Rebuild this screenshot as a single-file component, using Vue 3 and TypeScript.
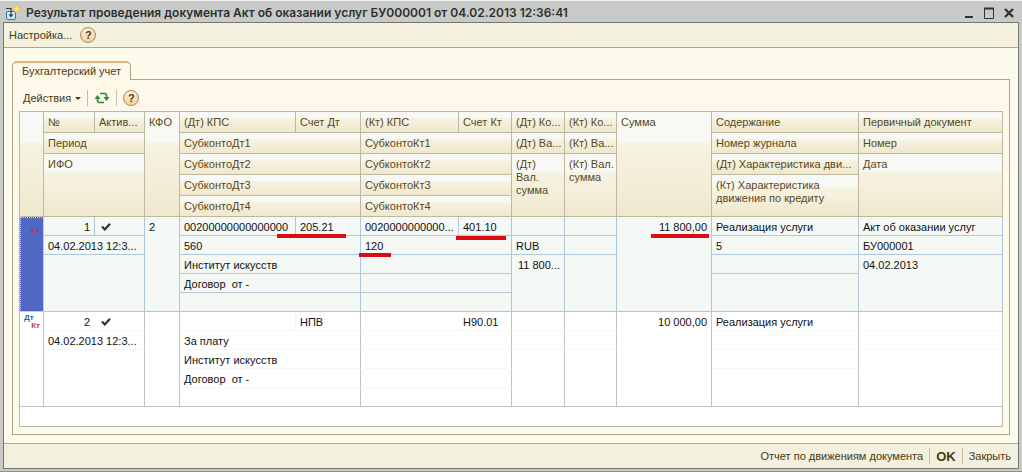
<script setup lang="ts">
interface Cell {
  text?: string
  cs?: number
  rs?: number
  cls?: string
  kind?: 'check' | 'flag'
}

const columns: string[] = ['c24', 'c51', 'c50', 'c35', 'c116', 'c65', 'c98', 'c53', 'c53', 'c52', 'c95', 'c147', 'rest']

const header: Cell[][] = [
  [
    { rs: 5 }, { text: '№' }, { text: 'Актив...' }, { text: 'КФО', rs: 5, cls: 'tight' },
    { text: '(Дт) КПС' }, { text: 'Счет Дт' }, { text: '(Кт) КПС' }, { text: 'Счет Кт' },
    { text: '(Дт) Ко...' }, { text: '(Кт) Ко...' }, { text: 'Сумма', rs: 5 },
    { text: 'Содержание' }, { text: 'Первичный документ' },
  ],
  [
    { text: 'Период', cs: 2 }, { text: 'СубконтоДт1', cs: 2 }, { text: 'СубконтоКт1', cs: 2 },
    { text: '(Дт) Ва...' }, { text: '(Кт) Ва...' }, { text: 'Номер журнала' }, { text: 'Номер' },
  ],
  [
    { text: 'ИФО', cs: 2, rs: 3 }, { text: 'СубконтоДт2', cs: 2 }, { text: 'СубконтоКт2', cs: 2 },
    { text: '(Дт)\nВал.\nсумма', rs: 3 }, { text: '(Кт) Вал.\nсумма', rs: 3 },
    { text: '(Дт) Характеристика дви...' }, { text: 'Дата', rs: 3 },
  ],
  [
    { text: 'СубконтоДт3', cs: 2 }, { text: 'СубконтоКт3', cs: 2 },
    { text: '(Кт) Характеристика\nдвижения по кредиту', rs: 2 },
  ],
  [{ text: 'СубконтоДт4', cs: 2 }, { text: 'СубконтоКт4', cs: 2 }],
]

const records: { id: number; selected: boolean; rows: Cell[][] }[] = [
  {
    id: 1,
    selected: true,
    rows: [
      [
        { rs: 5, kind: 'flag', cls: 'flag' }, { text: '1', cls: 'num' }, { kind: 'check' }, { text: '2', rs: 5, cls: 'tight' },
        { text: '00200000000000000' }, { text: '205.21', cls: 'mark mark-account' },
        { text: '0020000000000...' }, { text: '401.10', cls: 'mark mark-credit' },
        {}, {}, { text: '11 800,00', rs: 5, cls: 'num mark mark-sum' },
        { text: 'Реализация услуги' }, { text: 'Акт об оказании услуг' },
      ],
      [
        { text: '04.02.2013 12:3...', cs: 2 }, { text: '560', cs: 2 }, { text: '120', cs: 2, cls: 'mark mark-code' },
        { text: 'RUB' }, {}, { text: '5' }, { text: 'БУ000001' },
      ],
      [
        { cs: 2, rs: 3 }, { text: 'Институт искусств', cs: 2 }, { cs: 2 },
        { text: '11 800...', rs: 3, cls: 'num' }, { rs: 3 }, {}, { text: '04.02.2013', rs: 3 },
      ],
      [{ text: 'Договор  от -', cs: 2 }, { cs: 2 }, { rs: 2 }],
      [{ cs: 2 }, { cs: 2 }],
    ],
  },
  {
    id: 2,
    selected: false,
    rows: [
      [
        { rs: 5, kind: 'flag', cls: 'flag' }, { text: '2', cls: 'num soft' }, { kind: 'check' }, { rs: 5 },
        { cls: 'soft' }, { text: 'НПВ' }, { cls: 'soft' }, { text: 'Н90.01' },
        {}, {}, { text: '10 000,00', rs: 5, cls: 'num' },
        { text: 'Реализация услуги' }, {},
      ],
      [{ text: '04.02.2013 12:3...', cs: 2 }, { text: 'За плату', cs: 2 }, { cs: 2 }, {}, {}, {}, {}],
      [
        { cs: 2, rs: 3 }, { text: 'Институт искусств', cs: 2 }, { cs: 2 },
        { rs: 3 }, { rs: 3 }, {}, { rs: 3 },
      ],
      [{ text: 'Договор  от -', cs: 2 }, { cs: 2 }, { rs: 2 }],
      [{ cs: 2 }, { cs: 2 }],
    ],
  },
]
</script>

<template>
  <main class="window">
    <header class="titlebar">
      <svg class="app-icon" viewBox="0 0 16 16" aria-hidden="true">
        <rect x="1.5" y="6.5" width="9" height="8" rx="1.500" fill="#d5e8f5" stroke="#427196" />
        <path d="M1 3.500h5v8" fill="none" stroke="#24445d" stroke-width="1.200" />
        <path d="M3.500 9.500l2.500 3 2.500-3z" fill="#24445d" />
        <path d="M11.500 0l4 4-4 4-4-4z" fill="#fae36a" stroke="#d6bd58" />
      </svg>
      <h1>Результат проведения документа Акт об оказании услуг БУ000001 от 04.02.2013 12:36:41</h1>
      <div class="window-buttons">
        <button type="button" aria-label="Свернуть"><svg viewBox="0 0 12 12"><path d="M2 10h8" stroke-width="2" /></svg></button>
        <button type="button" aria-label="Развернуть"><svg viewBox="0 0 12 12"><path d="M1.500 1v10.500h9V1" /><path d="M1 1.500h10" stroke-width="2" /></svg></button>
        <button type="button" aria-label="Закрыть окно"><svg viewBox="0 0 12 12"><path d="M2 2l8 8M10 2l-8 8" stroke-width="2.400" /></svg></button>
      </div>
    </header>

    <div class="client">
      <nav class="toolbar">
        <button type="button">Настройка...</button>
        <button type="button" class="help" aria-label="Справка">?</button>
      </nav>

      <section class="body">
        <div class="tabs" role="tablist">
          <button type="button" role="tab" aria-selected="true" class="tab">Бухгалтерский учет</button>
          <span class="tab-line"></span>
        </div>
        <div class="panel" role="tabpanel">
          <div class="actions">
            <button type="button">Действия <span class="arrow"></span></button>
            <span class="divider"></span>
            <button type="button" class="refresh" aria-label="Обновить">
              <svg viewBox="0 0 16 14">
                <path d="M6 2.500h4.500q2 0 2 2V7M10 11.500H5.500q-2 0-2-2V7" fill="none" stroke="#2c8a35" stroke-width="1.600" />
                <path d="M9.500 6h6l-3 4zM.5 8h6l-3-4z" fill="#2c8a35" />
              </svg>
            </button>
            <span class="divider"></span>
            <button type="button" class="help" aria-label="Справка по движениям">?</button>
          </div>

          <div class="grid">
            <table>
              <colgroup>
                <col v-for="(c, i) in columns" :key="i" :class="c" />
              </colgroup>
              <thead>
                <tr v-for="(row, r) in header" :key="r">
                  <th v-for="(cell, i) in row" :key="i" :colspan="cell.cs" :rowspan="cell.rs" :class="cell.cls">{{ cell.text }}</th>
                </tr>
              </thead>
              <tbody v-for="rec in records" :key="rec.id" :class="{ selected: rec.selected }">
                <tr v-for="(row, r) in rec.rows" :key="r">
                  <td v-for="(cell, i) in row" :key="i" :colspan="cell.cs" :rowspan="cell.rs" :class="[cell.cls, { tall: cell.rs }]">
                    <svg v-if="cell.kind === 'check'" class="check" viewBox="0 0 10 10" role="img" aria-label="Активна">
                      <path d="M1 5.500L3.800 8.500 9 2.800" fill="none" stroke="#333" stroke-width="2.200" />
                    </svg>
                    <span v-else-if="cell.kind === 'flag'" class="dtkt"><span class="dt">Дт</span><span class="kt">Кт</span></span>
                    <span v-else>{{ cell.text }}</span>
                  </td>
                </tr>
              </tbody>
            </table>
          </div>
        </div>
      </section>

      <footer class="footer">
        <button type="button">Отчет по движениям документа</button>
        <span class="divider"></span>
        <button type="button" class="ok">OK</button>
        <span class="divider"></span>
        <button type="button">Закрыть</button>
      </footer>
    </div>
  </main>
</template>

<style>
body {
  background: #c8cac8;
}
</style>

<style scoped>
* {
  box-sizing: border-box;
}

.window {
  display: flex;
  flex-direction: column;
  min-height: 100vh;
  padding: 0 3px 2px;
  border-top: 1px solid #f4f4f4;
  border-bottom: 1px solid #8f918d;
  background: #c8cac8;
  color: #463a14;
  font: 11px/13px "Liberation Sans", Arial, sans-serif;
}

button {
  margin: 0;
  padding: 0;
  border: 0;
  background: none;
  color: inherit;
  font: inherit;
  white-space: nowrap;
}

.titlebar {
  display: flex;
  align-items: center;
  height: 21px;
  padding: 2px 4px 0 2px;
}

.app-icon {
  width: 16px;
  height: 16px;
}

h1 {
  flex: 1;
  margin: 0 0 0 5px;
  overflow: hidden;
  color: #303030;
  font-family: Inter, "Liberation Sans", sans-serif;
  font-size: 12px;
  font-weight: 600;
  white-space: nowrap;
}

.window-buttons {
  display: flex;
  gap: 8px;
}

.window-buttons button,
.window-buttons svg {
  display: block;
  width: 12px;
  height: 12px;
}

.window-buttons path {
  fill: none;
  stroke: #333;
}

.client {
  display: flex;
  flex: 1;
  flex-direction: column;
  border: 1px solid #767870;
  background: #fdfbec;
}

.toolbar {
  display: flex;
  align-items: center;
  gap: 8px;
  height: 25px;
  padding: 0 5px;
  border-bottom: 1px solid #aaa88e;
  background: #f4f1de;
}

.help {
  width: 16px;
  height: 16px;
  border: 1px solid #a88b63;
  border-radius: 50%;
  background: radial-gradient(circle at 50% 25%, #fff4dc, #f3c78b);
  color: #4c3923;
  font-weight: bold;
  line-height: 14px;
}

.body {
  display: flex;
  flex: 1;
  flex-direction: column;
  padding: 13px 8px 8px;
}

.tabs {
  display: flex;
}

.tab {
  height: 19px;
  padding: 0 9px;
  border: 1px solid #aaa88a;
  border-top: 2px solid #e2b778;
  border-bottom: 0;
  border-radius: 5px 5px 0 0;
  background: #fef8ea;
}

.tab-line {
  flex: 1;
  border-bottom: 1px solid #aaa88a;
}

.panel {
  display: flex;
  flex: 1;
  flex-direction: column;
  padding: 5px 6px 7px;
  border: 1px solid #aaa88a;
  border-top: 0;
  background: linear-gradient(#fef8ea, #fdfbe9);
}

.actions {
  display: flex;
  align-items: center;
  gap: 6px;
  height: 26px;
  padding-left: 4px;
}

.arrow {
  display: inline-block;
  margin: 0 0 2px 1px;
  border: 3px solid transparent;
  border-top-color: #463a14;
  border-bottom: 0;
}

.divider {
  width: 1px;
  height: 16px;
  background: #c3c0a8;
}

.refresh,
.refresh svg {
  display: block;
  width: 16px;
  height: 14px;
}

.grid {
  flex: 1;
  min-height: 316px;
  border: 1px solid #b9b8aa;
  border-right: 0;
  background: linear-gradient(#b9b8aa, #b9b8aa) right / 1px 100% no-repeat #fff;
}

table {
  width: 100%;
  border-spacing: 0;
  table-layout: fixed;
}

.c24 { width: 24px; }
.c35 { width: 35px; }
.c50 { width: 50px; }
.c51 { width: 51px; }
.c52 { width: 52px; }
.c53 { width: 53px; }
.c65 { width: 65px; }
.c95 { width: 95px; }
.c98 { width: 98px; }
.c116 { width: 116px; }
.c147 { width: 147px; }

th,
td {
  padding: 4px 4px 0;
  overflow: hidden;
  border-right: 1px solid #bdb89e;
  border-bottom: 1px solid #bdb89e;
  text-align: left;
  vertical-align: top;
  white-space: pre;
}

th {
  height: 21px;
  background: linear-gradient(#f8f9f5 0 28%, #f7f3e3 30%, #f0e8cd);
  color: #58481c;
  font-weight: normal;
}

td {
  height: 19px;
  border-right-color: #c2c4c2;
  border-bottom-color: #f6f8f6;
  color: #111;
}

td.soft {
  border-right-color: #f6f8f6;
}

.tight {
  padding-right: 0;
}

.num {
  text-align: right;
}

.selected td {
  border-color: #b0c8dc;
  background: #f4f9f6;
}

tbody:last-child .tall,
tbody:last-child tr:last-child td {
  border-bottom-color: #c2c4c2;
}

.check {
  display: block;
  width: 10px;
  height: 10px;
  margin-left: 2px;
}

td.flag {
  padding: 2px 3px 0 4px;
}

.selected td.flag {
  outline: 1px dotted #c7d0ee;
  outline-offset: -1px;
  background: #5068c4;
}

.dtkt {
  display: grid;
  font-size: 8px;
  font-weight: bold;
  line-height: 8px;
}

.dt {
  color: #2a69a0;
}

.kt {
  color: #b04a35;
  text-align: right;
}

.selected .dt {
  color: #4a6cbc;
}

.selected .kt {
  color: #9b4276;
}

td.mark {
  position: relative;
  overflow: visible;
}

.mark::after {
  position: absolute;
  z-index: 1;
  height: 4px;
  background: #dc0c14;
  content: "";
}

.mark-account::after {
  top: 17px;
  left: -19px;
  width: 69px;
}

.mark-credit::after {
  top: 19px;
  left: -3px;
  width: 50px;
}

.mark-sum::after {
  top: 17px;
  right: 2px;
  width: 58px;
}

.mark-code::after {
  top: 17px;
  left: -2px;
  width: 32px;
}

.footer {
  display: flex;
  align-items: center;
  justify-content: flex-end;
  gap: 6px;
  height: 25px;
  padding-right: 7px;
  border-top: 1px solid #aaa88e;
  background: #f3f0df;
}

.ok {
  font-size: 13px;
  font-weight: bold;
}
</style>
